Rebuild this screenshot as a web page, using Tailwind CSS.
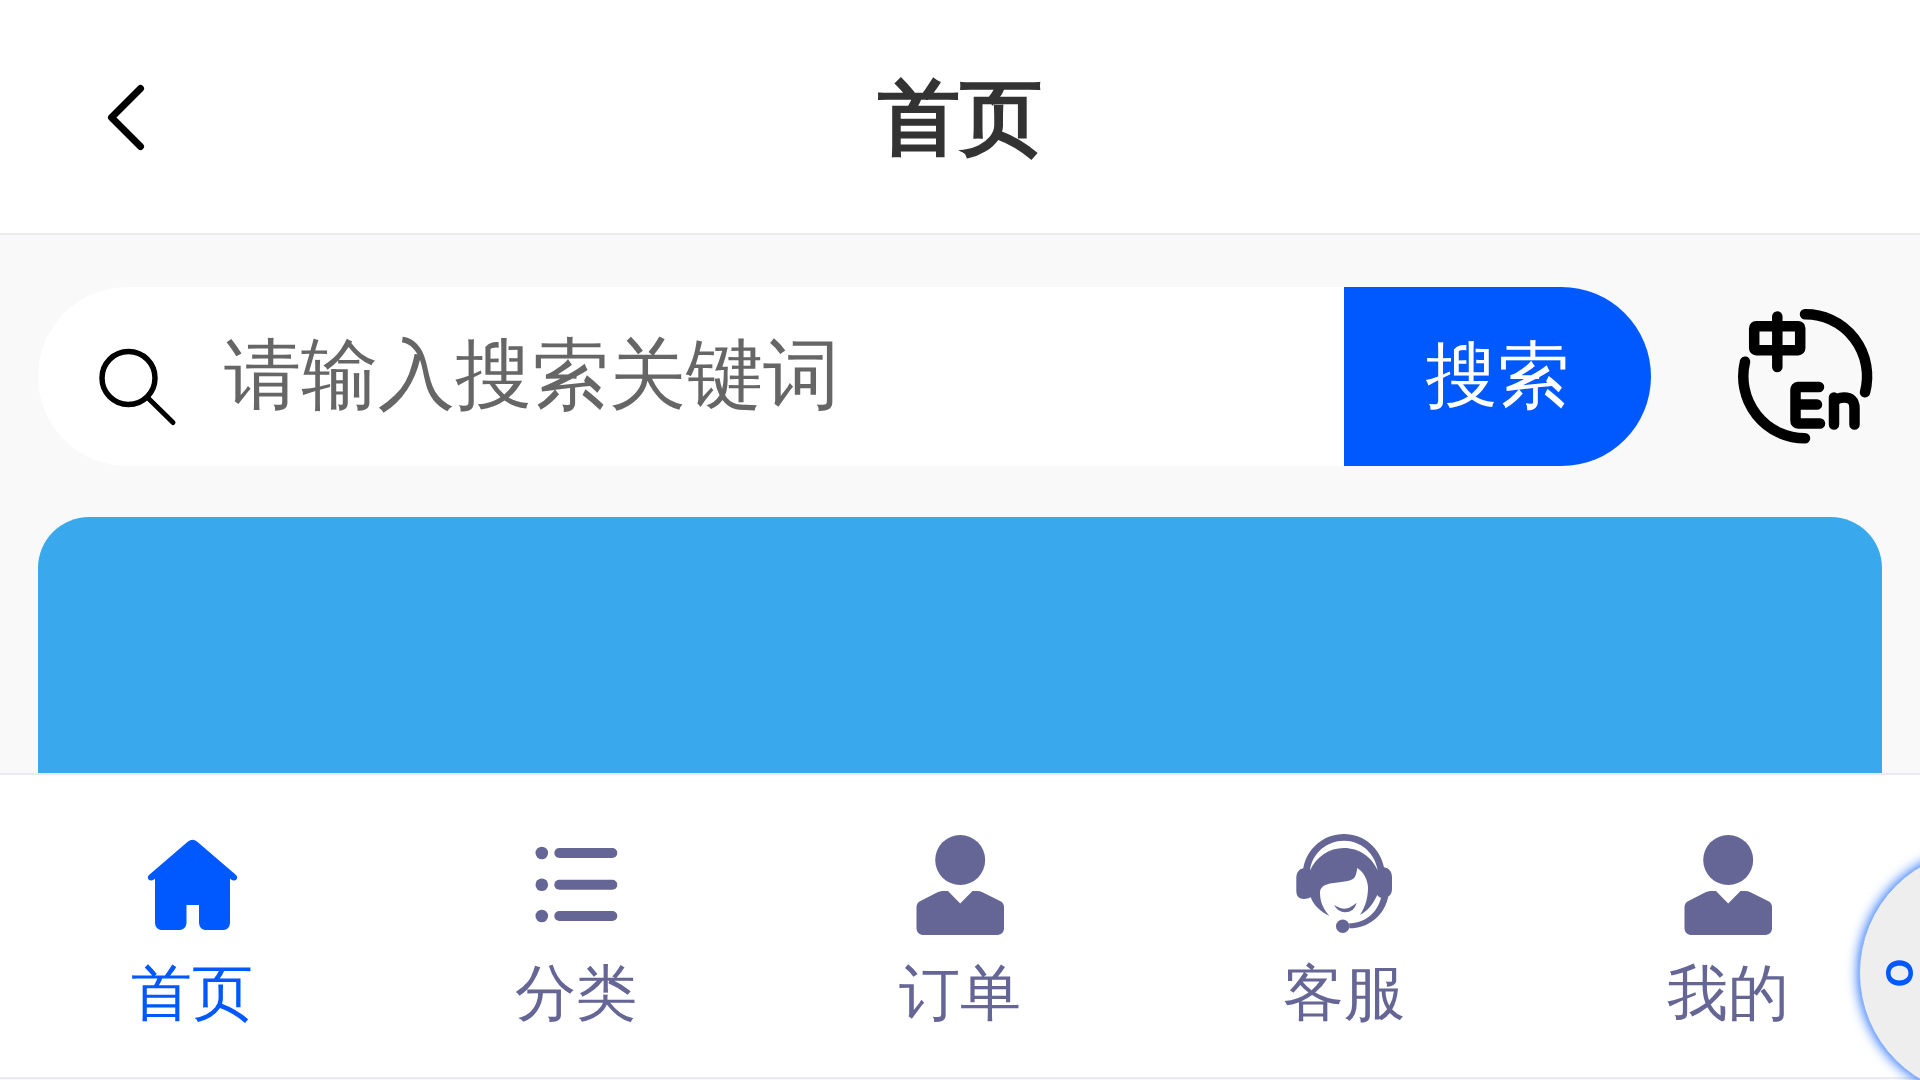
<!DOCTYPE html>
<html lang="zh-CN">
<head>
    <meta charset="UTF-8">
    <meta name="viewport" content="width=device-width, initial-scale=1.0">
    <title>首页</title>
    <script src="https://cdn.jsdelivr.net/npm/@tailwindcss/browser@4"></script>
</head>
<body class="h-screen overflow-hidden bg-[#f9f9f9] text-[#333] font-['Liberation_Sans','WenQuanYi_Zen_Hei','Noto_Sans_CJK_SC',sans-serif]">
    <div class="flex h-full flex-col">
        <!-- 顶部导航 -->
        <header class="grid h-[235px] shrink-0 grid-cols-[1fr_auto_1fr] items-center border-b-2 border-[#ebebef] bg-white">
            <button type="button" aria-label="返回" class="ml-[90px] size-[76px]">
                <svg viewBox="0 0 76 76" class="size-full" fill="none" stroke="#000" stroke-width="7" stroke-linecap="round" stroke-linejoin="round">
                    <path d="M50.500 9.500L21.500 38.500L50.500 67.500" />
                </svg>
            </button>
            <h1 class="pt-0.5 text-[82px] leading-[100px] font-bold [-webkit-text-stroke:3px_#333]">首页</h1>
        </header>

        <main class="flex min-h-0 flex-1 flex-col px-[38px] pt-[52px]">
            <!-- 搜索栏 -->
            <div class="flex shrink-0 items-center">
                <form class="flex h-[179px] flex-1 overflow-hidden rounded-[90px] bg-white">
                    <label for="keyword" class="flex items-center pl-[61px]">
                        <svg viewBox="0 0 80 80" class="mt-[22px] size-[80px]" fill="none" stroke="#000" stroke-linecap="round">
                            <circle cx="29.500" cy="30" r="26.500" stroke-width="5.500" />
                            <path d="M49 50L74 74.500" stroke-width="5" />
                        </svg>
                    </label>
                    <input id="keyword" type="text" placeholder="请输入搜索关键词" aria-label="搜索关键词"
                        class="ml-[45px] min-w-0 flex-1 pb-1 text-[77px] outline-none placeholder:text-[#666]">
                    <button type="button" class="w-[307px] bg-[#0059ff] pb-1 text-[72px] text-white">搜索</button>
                </form>
                <button type="button" aria-label="切换语言" class="ml-[86px] mr-[8px] size-[137px]">
                    <svg viewBox="0 0 137 137" class="size-full" fill="none" stroke="#000" stroke-width="10.500" stroke-linecap="round" stroke-linejoin="round">
                        <path d="M68 6.300A61.500 62 0 0 1 128 84.300" />
                        <path d="M8 53.700A61.500 62 0 0 0 68 130.300" />
                        <rect x="17.200" y="18.200" width="46" height="24" rx="2" />
                        <path d="M40.300 8.500V59" />
                        <path d="M82 79H61Q58.500 79 58.500 82V112.500Q58.500 115.500 61 115.500H83M59 96.500H80" />
                        <path d="M97 89.500V116.500M97 94Q100 89.500 107 89.500Q117.500 89.500 117.500 100V116.500" />
                    </svg>
                </button>
            </div>
            <!-- 轮播图 -->
            <div class="mt-[51px] flex-1 rounded-t-[51px] bg-[#39a8ed]"></div>
        </main>

        <!-- 底部导航 -->
        <nav class="mb-px grid h-[306px] shrink-0 grid-cols-5 border-y-2 border-[#ebebef] bg-white text-[61px] leading-[80px] text-[#666696]">
            <a href="#" class="flex flex-col items-center gap-[18px] pt-[60px] text-[#0059ff]">
                <svg viewBox="0 0 100 100" class="size-[100px]" fill="currentColor">
                    <path d="M46 6.500Q50.500 3 55 6.500L94 40Q96 42 94.500 44.500Q92 46.500 89 44.500L88 43.500V88Q87.500 94 82 95H63Q57.500 94 57 88V70H44.500V88Q44 94 38 95H19Q13.500 94 13 88V43.500L12 44.500Q9 46.500 6.500 44.500Q5 42 7 40Z" />
                </svg>
                <span>首页</span>
            </a>
            <a href="#" class="flex flex-col items-center gap-[18px] pt-[60px]">
                <svg viewBox="0 0 100 100" class="size-[100px]" fill="currentColor">
                    <circle cx="15.800" cy="18" r="6.300" /><rect x="28.300" y="13" width="63" height="10" rx="5" />
                    <circle cx="15.800" cy="49.700" r="6.300" /><rect x="28.300" y="44.700" width="63" height="10" rx="5" />
                    <circle cx="15.800" cy="81" r="6.300" /><rect x="28.300" y="76" width="63" height="10" rx="5" />
                </svg>
                <span>分类</span>
            </a>
            <a href="#" class="flex flex-col items-center gap-[18px] pt-[60px]">
                <svg viewBox="0 0 100 100" class="size-[100px]" fill="currentColor">
                    <circle cx="50.200" cy="25" r="25" />
                    <path d="M38 56L50.200 68.500L62.500 56H67Q70 56 72 57L91 66.500Q94 68.500 94 72V94Q93.500 99 88 100H12.500Q7 99 6.500 94V72Q6.500 68.500 9.500 66.500L28 57Q31 56 33 56Z" />
                </svg>
                <span>订单</span>
            </a>
            <a href="#" class="flex flex-col items-center gap-[18px] pt-[60px]">
                <svg viewBox="0 0 100 100" class="size-[100px] overflow-visible" fill="currentColor" fill-rule="evenodd">
                    <path d="M9.300 33.300C13 13 30 -1 50 -1S86 13 90 32.300C95 33 98 37 98 42V54C98 60 94 63 89 63C86 63 84.500 62 83.300 60C79 69 74 76 66 79.700C72 71 74 62 74 52C73.500 45 70 37 63.300 33C62.500 38 62 40 61 41.700C58 46 53 46 49 46.700L36 48.500C29 50 26 53 26 58C26 67 29.500 74 35.300 81C27 77 20 71 16.700 62.300C14.500 63.500 12.500 64 10 64C5 64 2.300 61 2.300 56V43C2.300 38 5 34 9.300 33.300ZM16 35.500C22 22 35 13 50 13S78 22 83.700 35.500C81 18 67 5.700 50 5.700S18 18 16 35.500Z" />
                    <path d="M94.300 61C91 80 75 93.300 55.300 93.300V88.300C70 88.300 83 79 87.300 62Z" />
                    <circle cx="48.700" cy="91.300" r="6.700" />
                    <path d="M40 70Q51 77 59 70.500L62.700 67.700Q60 77.300 51 77.300Q44 77.300 40 70Z" />
                </svg>
                <span>客服</span>
            </a>
            <a href="#" class="flex flex-col items-center gap-[18px] pt-[60px]">
                <svg viewBox="0 0 100 100" class="size-[100px]" fill="currentColor">
                    <circle cx="50.200" cy="25" r="25" />
                    <path d="M38 56L50.200 68.500L62.500 56H67Q70 56 72 57L91 66.500Q94 68.500 94 72V94Q93.500 99 88 100H12.500Q7 99 6.500 94V72Q6.500 68.500 9.500 66.500L28 57Q31 56 33 56Z" />
                </svg>
                <span>我的</span>
            </a>
        </nav>
    </div>

    <!-- 悬浮按钮 -->
    <button type="button" class="fixed right-[-187px] bottom-[-17px] size-[248px] rounded-full border border-[#8ab3ff] bg-[#eee] pl-[29px] text-left font-[Inter,sans-serif] text-[50px] leading-[30px] font-medium text-[#0059ff] shadow-[0_0_13px_#0059ff]">
        <span class="block w-[30px] rotate-90 text-center">o</span>
    </button>
</body>
</html>
